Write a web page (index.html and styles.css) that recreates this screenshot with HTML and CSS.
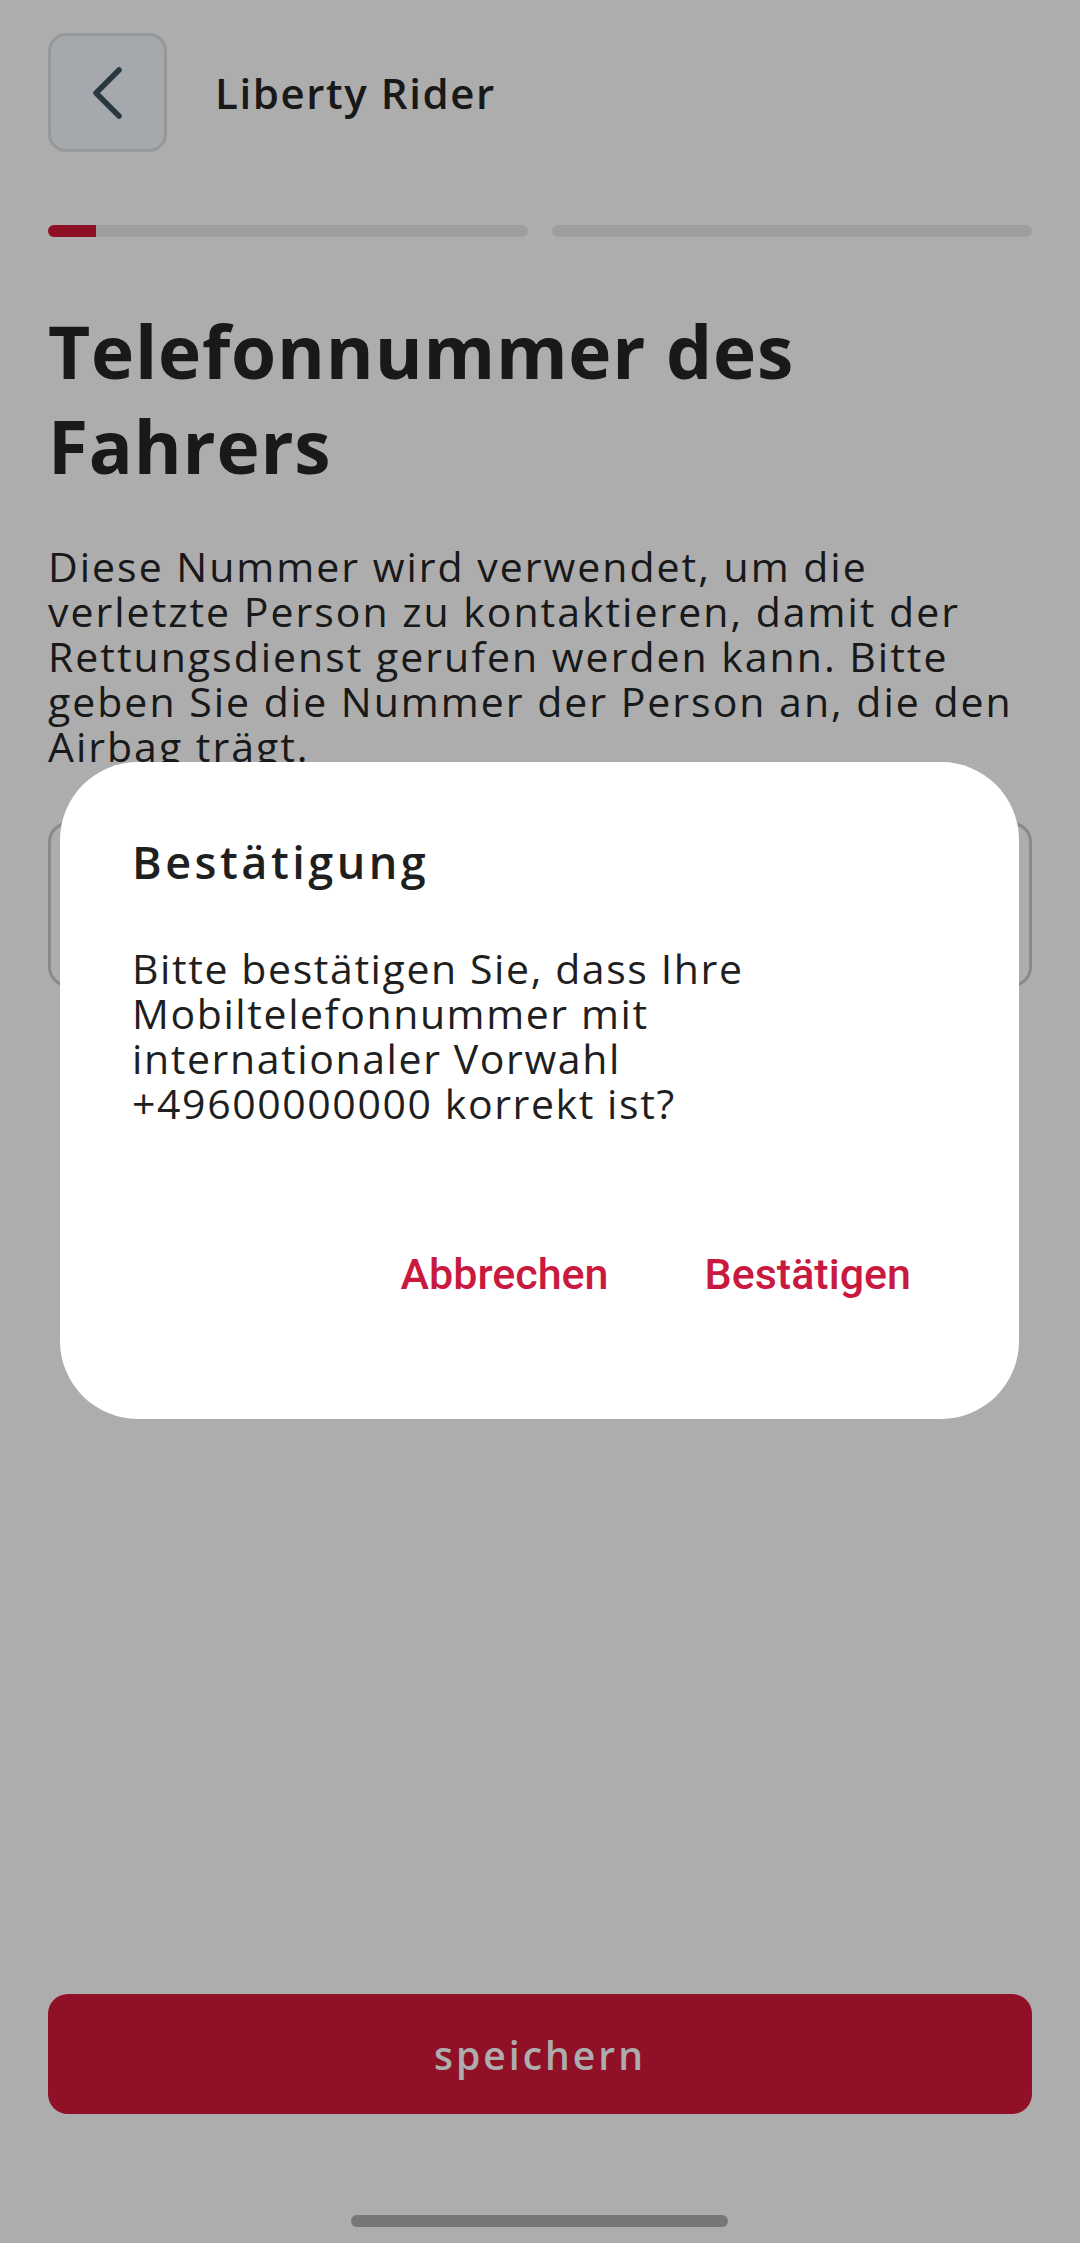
FILE: index.html
```html
<!DOCTYPE html>
<html>
<head>
  <meta charset="UTF-8">
  <meta name="viewport" content="width=device-width, initial-scale=1.0">
  <title>Liberty Rider - Telefonnummer</title>
  <link rel="stylesheet" href="styles.css">
</head>
<body>
  <div class="screen">
    <div class="top-bar">
      <button class="back-btn" title="Zurück">
        <svg width="33" height="56" viewBox="0 0 33 56">
          <path d="M28 5 L5 28 L28 51" fill="none" stroke="#3e5561" stroke-width="5.5" stroke-linecap="round" stroke-linejoin="round"/>
        </svg>
      </button>
      <span class="app-title">Liberty Rider</span>
    </div>

    <div class="steps">
      <div class="step"><div class="step-fill" style="width: 10%"></div></div>
      <div class="step"></div>
    </div>

    <h1 class="page-title">Telefonnummer des Fahrers</h1>

    <p class="intro">Diese Nummer wird verwendet, um die verletzte Person zu kontaktieren, damit der Rettungsdienst gerufen werden kann. Bitte geben Sie die Nummer der Person an, die den Airbag trägt.</p>

    <div class="phone-field"></div>

    <div class="footer">
      <button class="save-btn">speichern</button>
    </div>
  </div>

  <div class="scrim"></div>

  <div class="dialog">
    <h2 class="dialog-title">Bestätigung</h2>
    <p class="dialog-text">Bitte bestätigen Sie, dass Ihre Mobiltelefonnummer mit internationaler Vorwahl +49600000000 korrekt ist?</p>
    <div class="dialog-actions">
      <button class="text-btn">Abbrechen</button>
      <button class="text-btn">Bestätigen</button>
    </div>
  </div>

  <div class="home-bar"></div>
</body>
</html>
```

FILE: styles.css
```css
* {
  margin: 0;
  padding: 0;
  box-sizing: border-box;
}

body {
  font-family: 'Open Sans', 'Noto Sans', sans-serif;
  background: white;
  color: #262626;
  width: 1080px;
  height: 100vh;
  overflow: hidden;
}

.screen {
  height: 100vh;
  display: flex;
  flex-direction: column;
  padding: 33px 48px 129px;
}

.top-bar {
  display: flex;
  align-items: center;
  gap: 48px;
}

.back-btn {
  width: 119px;
  height: 119px;
  border: 3px solid #dee1e4;
  border-radius: 18px;
  background: #f4faff;
  display: flex;
  align-items: center;
  justify-content: center;
  cursor: pointer;
}

.app-title {
  font-size: 42px;
  font-weight: 600;
  letter-spacing: 1.6px;
}

.steps {
  display: flex;
  gap: 24px;
  margin-top: 73px;
}

.step {
  flex: 1;
  height: 12px;
  border-radius: 6px;
  background: #e7e7e7;
  overflow: hidden;
}

.step-fill {
  height: 100%;
  background: #d2183a;
}

.page-title {
  margin-top: 66px;
  font-size: 73px;
  font-weight: 700;
  line-height: 95px;
  letter-spacing: 0.8px;
}

.intro {
  margin-top: 51px;
  font-size: 41px;
  line-height: 45px;
  letter-spacing: 2px;
}

.phone-field {
  margin-top: 53px;
  height: 165px;
  border: 3px solid #cccccc;
  border-radius: 20px;
}

.footer {
  margin-top: auto;
}

.save-btn {
  width: 100%;
  height: 120px;
  border: none;
  border-radius: 20px;
  background: #d4183b;
  color: white;
  font-family: inherit;
  font-size: 39px;
  font-weight: 600;
  letter-spacing: 3px;
}

.scrim {
  position: fixed;
  top: 0;
  left: 0;
  width: 100%;
  height: 100%;
  background: rgba(0,0,0,0.32);
}

.dialog {
  position: fixed;
  top: 762px;
  left: 60px;
  width: 959px;
  background: white;
  border-radius: 78px;
  padding: 72px 108px 120px 72px;
  color: #1f1f1f;
}

.dialog-title {
  font-size: 45px;
  font-weight: 600;
  line-height: 56px;
  letter-spacing: 3.5px;
}

.dialog-text {
  margin-top: 56px;
  font-size: 41px;
  line-height: 45px;
  letter-spacing: 1.6px;
}

.dialog-actions {
  margin-top: 123px;
  display: flex;
  justify-content: flex-end;
  gap: 96px;
}

.text-btn {
  background: none;
  border: none;
  font-family: 'Roboto', sans-serif;
  font-size: 43px;
  font-weight: 500;
  line-height: 50px;
  color: #c9193e;
  cursor: pointer;
}

.home-bar {
  position: fixed;
  left: 351px;
  bottom: 16px;
  width: 377px;
  height: 12px;
  border-radius: 6px;
  background: #777;
}
```
